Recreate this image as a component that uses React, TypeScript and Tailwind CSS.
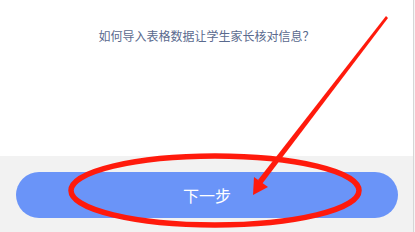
export default function App() {
  return (
    <div className="relative flex h-[232px] w-[415px] overflow-hidden bg-[#f5f5f5] font-['Microsoft_YaHei','Noto_Sans_CJK_SC',sans-serif]">
      <div className="flex w-[413px] flex-col">
        <div className="flex h-[156px] justify-center bg-white pt-[27px]">
          <p className="text-[12px] leading-[18px] text-[#5a6a8e]">如何导入表格数据让学生家长核对信息？</p>
        </div>
        <div className="flex flex-1 bg-[#f2f2f2] pl-4 pr-[15px] pt-4">
          <button className="flex h-[46px] w-full items-center justify-center rounded-full bg-[#6a94f8] text-[16px] text-white">
            下一步
          </button>
        </div>
      </div>
      <div className="w-px bg-[#d6d6d6]" />

      {/* annotation: red circle and arrow */}
      <svg className="pointer-events-none absolute inset-0" width="415" height="232" viewBox="0 0 415 232">
        <ellipse cx="215" cy="190.5" rx="144" ry="34.5" fill="none" stroke="#ff1a0c" strokeWidth="5.5" />
        <polygon points="386,16 388,18 262,184 258,180" fill="#ff1a0c" />
        <polygon points="253,195 254,177 268,187" fill="#ff1a0c" />
      </svg>
    </div>
  );
}
